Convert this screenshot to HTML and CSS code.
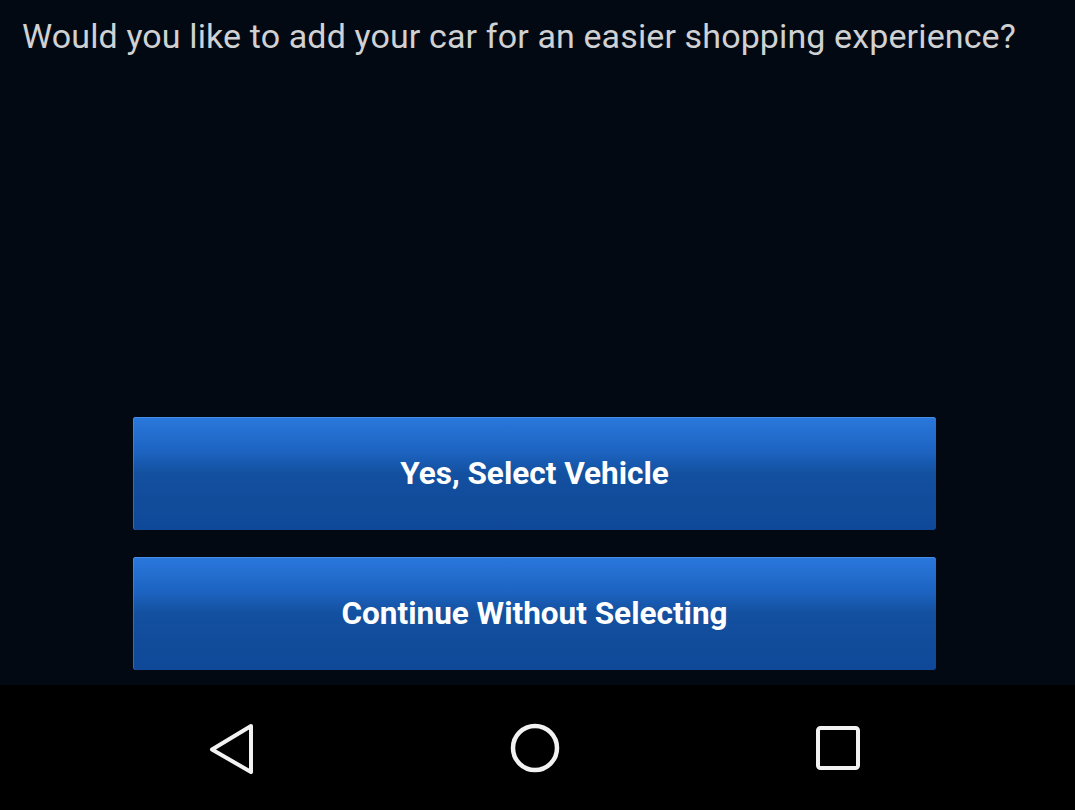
FILE: index.html
```html
<!DOCTYPE html>
<html>
<head>
<meta charset="utf-8">
<link rel="stylesheet" href="styles.css">
</head>
<body>
<div class="screen">
  <main class="content">
    <h1 class="question">Would you like to add your car for an easier shopping experience?</h1>
    <div class="actions">
      <button class="btn">Yes, Select Vehicle</button>
      <button class="btn">Continue Without Selecting</button>
    </div>
  </main>
  <nav class="navbar">
    <div class="nav-item">
      <svg width="48" height="52" viewBox="0 0 48 52"><path d="M43 4 L4 27.5 L43 50 Z" fill="none" stroke="#f2f2f2" stroke-width="4" stroke-linejoin="round"/></svg>
    </div>
    <div class="nav-item">
      <svg width="52" height="52" viewBox="0 0 52 52"><circle cx="26" cy="26" r="22" fill="none" stroke="#f2f2f2" stroke-width="4.5"/></svg>
    </div>
    <div class="nav-item">
      <svg width="48" height="48" viewBox="0 0 48 48"><rect x="4" y="4" width="40" height="40" rx="2.5" fill="none" stroke="#f2f2f2" stroke-width="4"/></svg>
    </div>
  </nav>
</div>
</body>
</html>
```

FILE: styles.css
```css
html, body {
  margin: 0;
  padding: 0;
  background: #020912;
}
.screen {
  width: 1075px;
  height: 810px;
  display: flex;
  flex-direction: column;
  background: #020912;
  font-family: Roboto, "Liberation Sans", sans-serif;
}
.content {
  flex: 1;
  display: flex;
  flex-direction: column;
  justify-content: space-between;
}
.question {
  margin: 0;
  padding: 16px 0 0 22px;
  font-size: 34px;
  line-height: 40px;
  font-weight: 400;
  color: #cfd1d3;
  letter-spacing: 0.12px;
  white-space: nowrap;
}
.actions {
  display: flex;
  flex-direction: column;
  gap: 27px;
  padding: 0 0 15px 133px;
}
.btn {
  width: 803px;
  height: 113px;
  border: none;
  border-radius: 3px;
  background: linear-gradient(to bottom, #2a78dc 0%, #1d64c2 30%, #13509f 50%, #0f4898 100%);
  box-shadow: inset 1px 0 0 rgba(120, 170, 240, 0.35), inset 0 1px 0 rgba(120, 170, 240, 0.4);
  color: #ffffff;
  font-family: Roboto, "Liberation Sans", sans-serif;
  font-weight: 700;
  font-size: 31.5px;
  padding: 0;
  cursor: pointer;
}
.navbar {
  height: 125px;
  background: #000;
  display: flex;
  align-items: center;
  gap: 253px;
  padding: 0 0 0 208px;
}
.nav-item {
  display: flex;
  align-items: center;
  justify-content: center;
}
```
